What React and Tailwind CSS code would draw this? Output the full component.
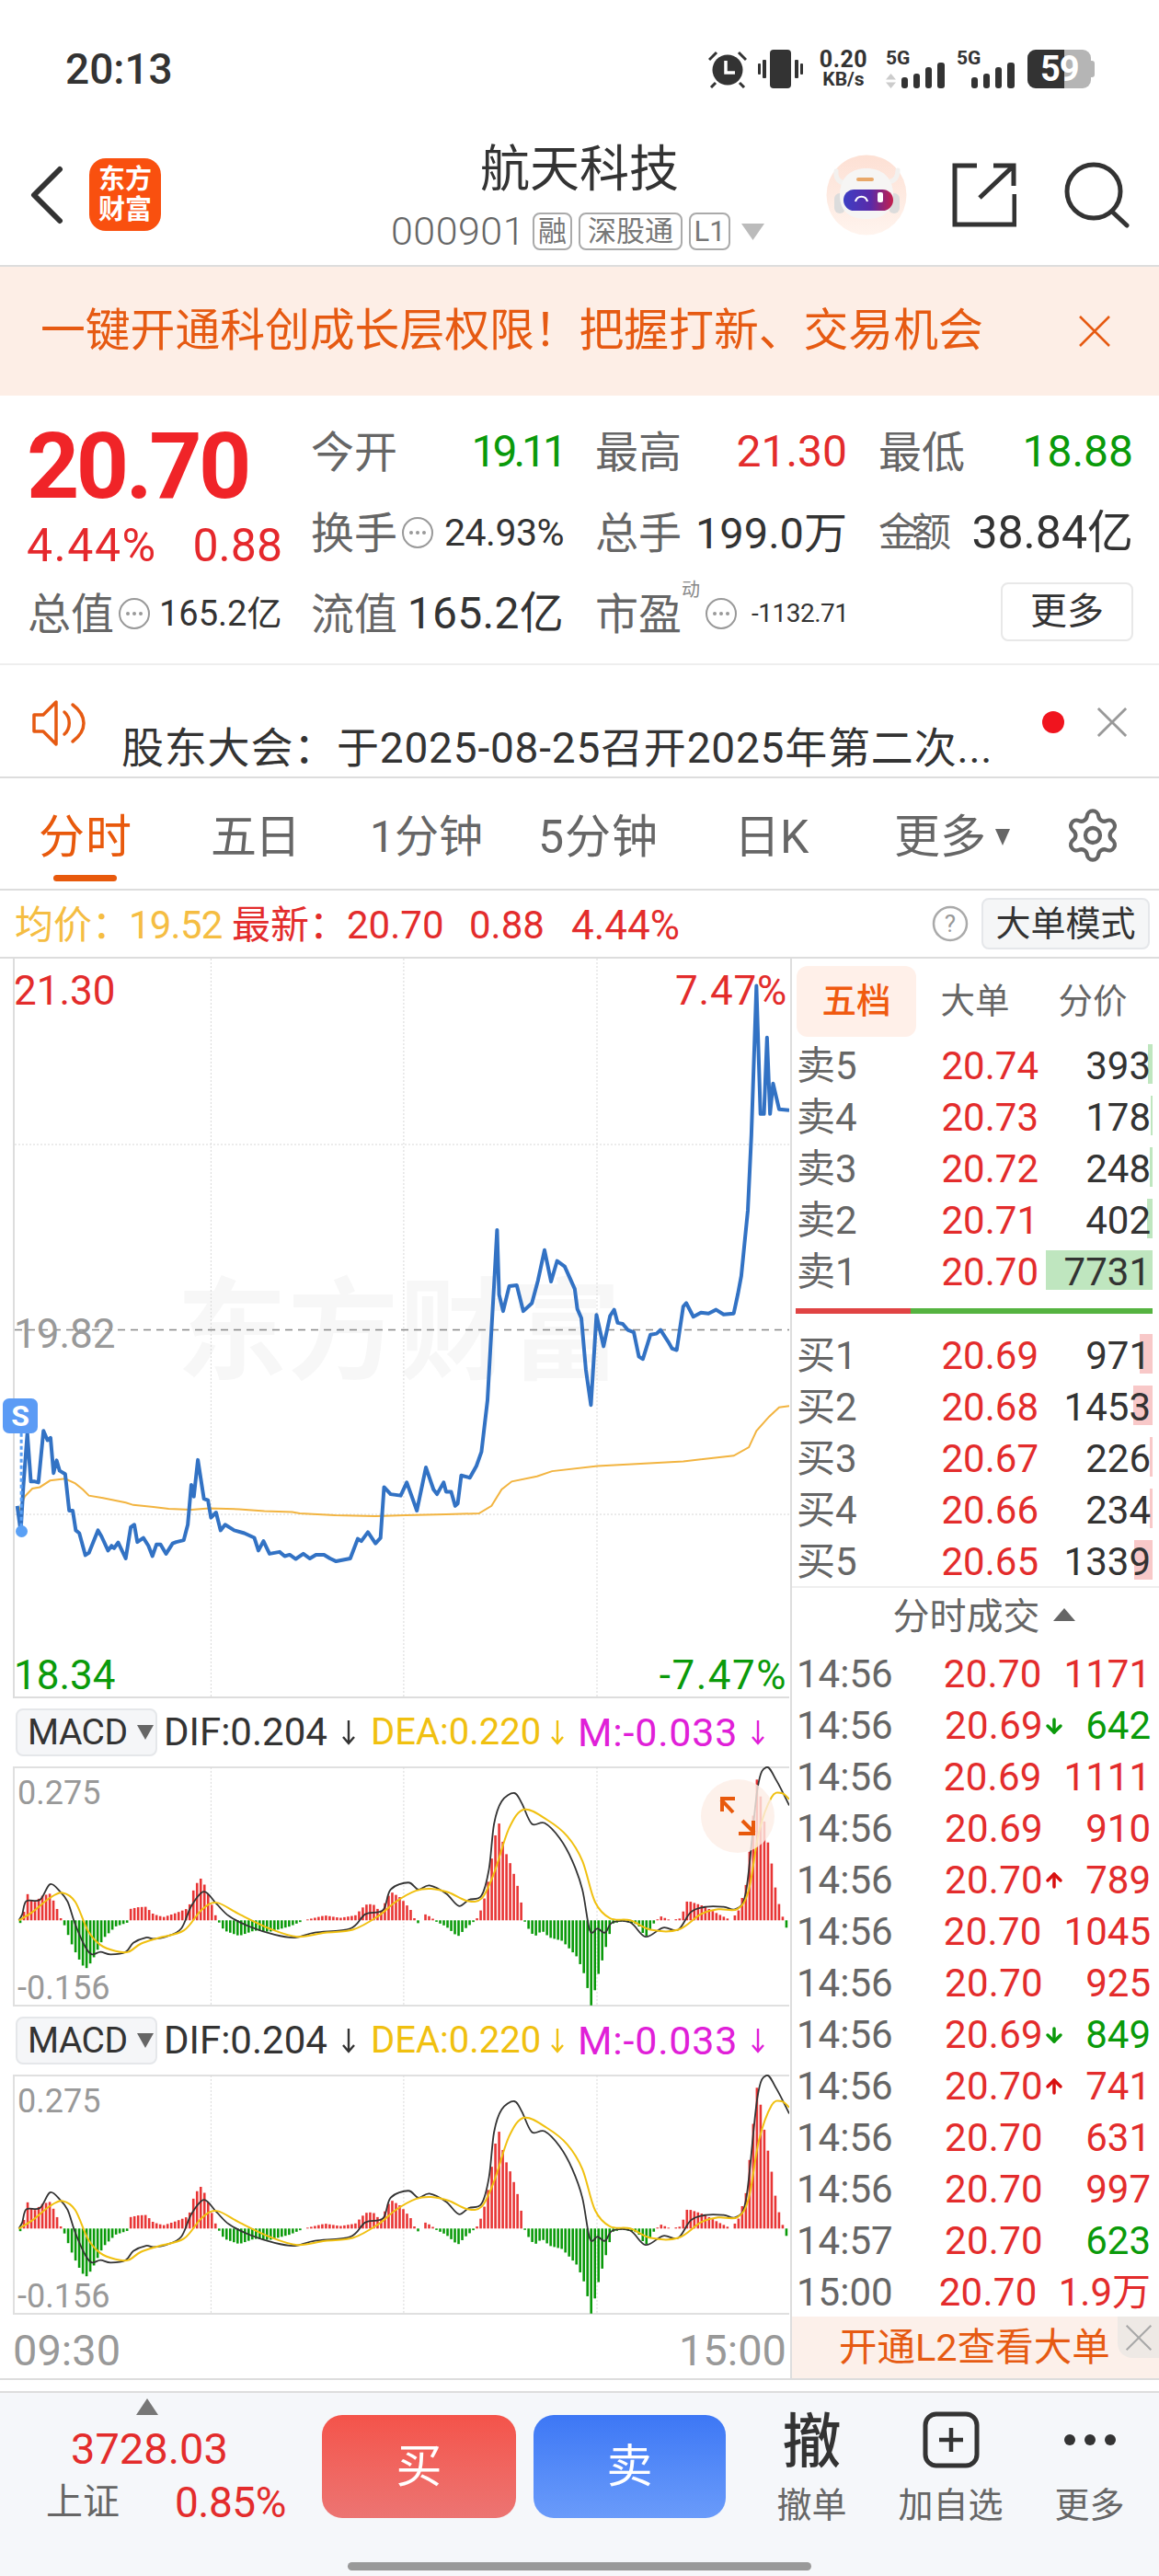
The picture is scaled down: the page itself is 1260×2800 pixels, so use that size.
import { ArrowDown, ArrowUp, Settings } from 'lucide-react';

const RED = 'text-[#e32c2c]';
const GREEN = 'text-[#0a9a0a]';

// price line, traced in a 1568-wide coordinate space
const pricePts = [[30,1170],[37,1225],[42,1130],[50,1015],[57,1118],[65,1118],[72,1120],[82,1010],[90,1030],[96,1025],[102,1100],[108,1073],[114,1095],[125,1102],[133,1180],[140,1180],[146,1222],[153,1228],[165,1275],[172,1270],[190,1222],[197,1235],[210,1265],[217,1255],[222,1260],[230,1248],[245,1282],[255,1215],[262,1210],[268,1247],[280,1238],[290,1255],[298,1277],[306,1252],[314,1252],[325,1272],[338,1250],[345,1247],[360,1243],[368,1210],[375,1125],[380,1150],[388,1072],[400,1155],[408,1158],[414,1195],[424,1184],[433,1222],[442,1210],[460,1222],[480,1228],[500,1238],[508,1265],[518,1245],[530,1272],[550,1268],[560,1277],[570,1274],[582,1283],[597,1272],[610,1282],[622,1274],[638,1274],[650,1282],[662,1288],[690,1282],[705,1240],[712,1245],[725,1226],[740,1250],[750,1238],[757,1130],[770,1145],[790,1148],[802,1120],[812,1150],[822,1180],[840,1088],[855,1135],[862,1145],[875,1120],[880,1140],[890,1140],[898,1170],[903,1165],[910,1105],[927,1110],[940,1085],[950,1055],[962,945],[968,830],[975,700],[981,582],[985,720],[993,755],[1005,702],[1020,700],[1033,755],[1050,738],[1062,690],[1075,625],[1088,692],[1100,648],[1115,660],[1135,708],[1140,750],[1148,770],[1157,880],[1167,955],[1178,763],[1192,830],[1205,765],[1213,752],[1220,780],[1230,782],[1240,795],[1252,800],[1262,852],[1270,857],[1285,805],[1297,803],[1305,795],[1320,820],[1328,835],[1337,838],[1350,745],[1356,738],[1370,767],[1385,758],[1400,760],[1415,752],[1430,762],[1450,760],[1458,720],[1465,680],[1478,540],[1485,380],[1495,62],[1503,335],[1510,335],[1516,172],[1522,335],[1528,270],[1540,325],[1560,327]];
const avgPts = [[30,1190],[45,1150],[60,1133],[75,1130],[95,1116],[125,1112],[145,1122],[160,1135],[172,1148],[200,1153],[245,1163],[260,1168],[300,1172],[330,1176],[375,1178],[410,1175],[470,1177],[520,1181],[575,1183],[590,1186],[660,1190],[740,1192],[800,1190],[880,1188],[945,1186],[970,1170],[990,1135],[1010,1118],[1060,1107],[1090,1096],[1180,1085],[1350,1075],[1450,1063],[1480,1045],[1495,1010],[1520,980],[1540,960],[1560,957]];

const macdBars = [[33,0],[40,-15],[48,72],[55,50],[65,45],[80,60],[95,65],[105,40],[118,0],[125,-15],[135,-50],[150,-90],[165,-120],[178,-100],[200,-45],[225,-15],[250,-5],[255,28],[270,32],[285,33],[300,15],[320,8],[345,18],[370,30],[378,70],[392,105],[402,85],[415,40],[425,5],[430,-5],[440,-25],[470,-38],[500,-25],[530,-28],[570,-15],[595,-2],[605,2],[640,12],[670,6],[700,12],[720,38],[735,40],[750,20],[770,70],[790,55],[810,25],[820,-3],[828,-10],[838,15],[850,8],[860,-3],[880,-15],[903,-40],[920,-18],[935,-3],[945,10],[960,70],[983,248],[995,175],[1010,130],[1025,70],[1035,0],[1040,-15],[1055,-40],[1070,-25],[1085,-42],[1110,-50],[1140,-90],[1155,-135],[1168,-210],[1180,-140],[1200,-50],[1210,-8],[1230,-2],[1260,-10],[1275,-42],[1290,-10],[1297,0],[1305,10],[1325,0],[1345,5],[1358,48],[1390,35],[1420,15],[1445,0],[1460,25],[1475,90],[1497,355],[1510,245],[1525,140],[1535,60],[1548,5],[1555,-20],[1560,-45]];
const difPts = [[33,555],[40,540],[48,508],[75,505],[95,467],[115,485],[130,510],[145,565],[165,620],[178,638],[195,632],[215,638],[245,632],[260,610],[285,597],[300,600],[325,595],[355,575],[375,520],[400,485],[425,515],[450,545],[490,570],[540,590],[580,597],[620,585],[690,575],[720,540],[755,530],[770,480],[805,463],[825,480],[847,470],[880,490],[905,520],[925,505],[950,495],[965,430],[975,320],[990,265],[1015,245],[1030,270],[1050,320],[1075,318],[1105,355],[1130,410],[1150,480],[1165,580],[1180,575],[1195,585],[1210,560],[1245,560],[1275,595],[1310,573],[1340,578],[1365,535],[1395,522],[1430,522],[1455,527],[1475,480],[1497,235],[1515,182],[1535,215],[1560,275]];
const deaPts = [[33,555],[60,535],[95,500],[120,488],[145,510],[170,580],[195,615],[225,630],[250,632],[275,612],[310,598],[360,580],[395,530],[425,512],[470,540],[530,575],[585,595],[640,585],[695,578],[745,545],[780,510],[820,483],[850,478],[885,487],[920,507],[950,502],[975,440],[1005,330],[1035,285],[1080,310],[1120,350],[1150,410],[1175,510],[1205,550],[1245,555],[1285,578],[1340,578],[1385,540],[1420,528],[1458,527],[1480,480],[1500,340],[1525,255],[1545,245],[1560,260]];

const sells = [
    ['卖5', '20.74', '393', 5],
    ['卖4', '20.73', '178', 2],
    ['卖3', '20.72', '248', 3],
    ['卖2', '20.71', '402', 6],
    ['卖1', '20.70', '7731', 116],
];
const buys = [
    ['买1', '20.69', '971', 14],
    ['买2', '20.68', '1453', 21],
    ['买3', '20.67', '226', 3],
    ['买4', '20.66', '234', 3],
    ['买5', '20.65', '1339', 20],
];
const trades = [
    ['14:56', '20.70', '', '1171', 'r'],
    ['14:56', '20.69', 'd', '642', 'g'],
    ['14:56', '20.69', '', '1111', 'r'],
    ['14:56', '20.69', '', '910', 'r'],
    ['14:56', '20.70', 'u', '789', 'r'],
    ['14:56', '20.70', '', '1045', 'r'],
    ['14:56', '20.70', '', '925', 'r'],
    ['14:56', '20.69', 'd', '849', 'g'],
    ['14:56', '20.70', 'u', '741', 'r'],
    ['14:56', '20.70', '', '631', 'r'],
    ['14:56', '20.70', '', '997', 'r'],
    ['14:57', '20.70', '', '623', 'g'],
    ['15:00', '20.70', '', '1.9万', 'r'],
];

const toLine = (pts) => pts.map((p) => p.join(',')).join(' ');

// smooth curve through the points
const toCurve = (pts) => {
    let d = `M${pts[0][0]} ${pts[0][1]}`;
    for (let i = 0; i < pts.length - 1; i++) {
        const p0 = pts[i - 1] || pts[i];
        const p1 = pts[i];
        const p2 = pts[i + 1];
        const p3 = pts[i + 2] || p2;
        const c1x = p1[0] + (p2[0] - p0[0]) / 6;
        const c1y = p1[1] + (p2[1] - p0[1]) / 6;
        const c2x = p2[0] - (p3[0] - p1[0]) / 6;
        const c2y = p2[1] - (p3[1] - p1[1]) / 6;
        d += ` C${c1x} ${c1y} ${c2x} ${c2y} ${p2[0]} ${p2[1]}`;
    }
    return d;
};

const barAt = (x) => {
    for (let i = 0; i < macdBars.length - 1; i++) {
        const [x0, v0] = macdBars[i];
        const [x1, v1] = macdBars[i + 1];
        if (x >= x0 && x <= x1) return v0 + ((v1 - v0) * (x - x0)) / (x1 - x0);
    }
    return 0;
};

const barXs = [];
for (let x = 36; x < 1560; x += 7.3) barXs.push(x);

function Cross({ size = 36, color = '#e65a12', width = 2.5 }) {
    return (
        <svg width={size} height={size} viewBox="0 0 36 36" fill="none" stroke={color} strokeWidth={width}>
            <path d="M2 2 L34 34 M34 2 L2 34" />
        </svg>
    );
}

function DotsCircle() {
    return (
        <svg width="36" height="36" viewBox="0 0 36 36" fill="none">
            <circle cx="18" cy="18" r="16" stroke="#999" strokeWidth="2" />
            <circle cx="11" cy="18" r="2" fill="#999" />
            <circle cx="18" cy="18" r="2" fill="#999" />
            <circle cx="25" cy="18" r="2" fill="#999" />
        </svg>
    );
}

function ThinArrow({ color }) {
    return (
        <svg width="18" height="28" viewBox="0 0 18 28" fill="none" stroke={color} strokeWidth="2.4">
            <path d="M9 1 V26 M3 19 L9 26 L15 19" />
        </svg>
    );
}

function Signal() {
    return (
        <svg width="47" height="28" viewBox="0 0 47 28" fill="#333">
            <rect x="0" y="16" width="7" height="12" rx="3" />
            <rect x="13" y="12" width="7" height="16" rx="3" />
            <rect x="26" y="5" width="7" height="23" rx="3" />
            <rect x="39" y="0" width="8" height="28" rx="3" />
        </svg>
    );
}

function StatusBar() {
    return (
        <div className="h-[140px] pt-[50px] pl-[71px] pr-[70px] flex justify-between items-start">
            <div className="text-[46px] leading-[50px] font-medium text-[#333]">20:13</div>
            <div className="flex items-center h-[50px]">
                <svg width="42" height="42" viewBox="0 0 42 42" className="mr-[12px]">
                    <circle cx="21" cy="22" r="16.5" fill="#333" />
                    <path d="M19 12 V25 H29" stroke="#fff" strokeWidth="3.5" fill="none" />
                    <path d="M1 11 L9 3 M41 11 L33 3 M8 36 L3 41 M34 36 L39 41" stroke="#333" strokeWidth="3" />
                </svg>
                <svg width="49" height="42" viewBox="0 0 49 42" className="mr-[18px]" fill="#333">
                    <rect x="13" y="0" width="23" height="42" rx="4" />
                    <rect x="0" y="15" width="3" height="12" rx="1" />
                    <rect x="5" y="11" width="4" height="20" rx="1" />
                    <rect x="40" y="11" width="4" height="20" rx="1" />
                    <rect x="46" y="15" width="3" height="12" rx="1" />
                </svg>
                <div className="w-[52px] mr-[20px] flex flex-col items-center font-bold text-[#333]">
                    <span className="text-[25px] leading-[23px] tracking-[0.5px]">0.20</span>
                    <span className="text-[21px] leading-[21px]">KB/s</span>
                </div>
                <div className="relative w-[64px] h-[42px] mr-[13px]">
                    <span className="absolute left-0 top-[-1px] text-[21px] leading-[20px] font-bold text-[#333]">5G</span>
                    <svg width="11" height="16" viewBox="0 0 11 16" className="absolute left-0 bottom-0" fill="#ccc">
                        <path d="M5.5 0 L11 6.5 H0 Z M5.5 16 L0 9.5 H11 Z" />
                    </svg>
                    <div className="absolute right-0 bottom-0 h-[28px] flex"><Signal /></div>
                </div>
                <div className="relative w-[63px] h-[42px] mr-[14px]">
                    <span className="absolute left-0 top-[-1px] text-[21px] leading-[20px] font-bold text-[#333]">5G</span>
                    <div className="absolute right-0 bottom-0 h-[28px] flex"><Signal /></div>
                </div>
                <div className="relative w-[73px] h-[42px]">
                    <div className="absolute left-0 top-0 w-[69px] h-[42px] rounded-[9px] bg-[#b5b5b5] overflow-hidden">
                        <div className="w-[40px] h-full bg-[#333]" />
                    </div>
                    <div className="absolute right-0 top-[12px] w-[6px] h-[18px] rounded-r-[3px] bg-[#b5b5b5]" />
                    <span className="absolute left-[14px] top-[2px] text-[38px] leading-[38px] font-bold text-white tracking-[-1px]">59</span>
                </div>
            </div>
        </div>
    );
}

function RobotIcon() {
    return (
        <svg width="88" height="88" viewBox="0 0 88 88">
            <defs>
                <linearGradient id="halo" x1="0" y1="0" x2="0" y2="1">
                    <stop offset="0" stopColor="#fde0d4" />
                    <stop offset="1" stopColor="#fff4ee" />
                </linearGradient>
                <linearGradient id="visor" x1="0" y1="0" x2="1" y2="0">
                    <stop offset="0" stopColor="#3d3fc4" />
                    <stop offset="0.55" stopColor="#5a2aa8" />
                    <stop offset="1" stopColor="#c41f4c" />
                </linearGradient>
            </defs>
            <circle cx="44" cy="44" r="43.5" fill="url(#halo)" />
            <path d="M11 18 C10 26 14 30 20 31 M78 17 C78 25 74 29 68 30" stroke="#f3f1ef" strokeWidth="5" fill="none" strokeLinecap="round" />
            <rect x="9" y="42" width="12" height="22" rx="6" fill="#dcdcdc" />
            <rect x="68" y="42" width="12" height="22" rx="6" fill="#dcdcdc" />
            <path d="M15 44 C15 22 30 15 44 15 C60 15 73 24 73 44 C73 62 62 70 44 70 C26 70 15 62 15 44 Z" fill="#f6f5f4" />
            <rect x="33" y="25" width="19" height="4" rx="2" fill="#e9a86a" />
            <rect x="19" y="38" width="54" height="23" rx="11.5" fill="url(#visor)" />
            <path d="M32 51 C34 44 43 44 45 51" stroke="#fff" strokeWidth="2.2" fill="none" />
            <rect x="56" y="41" width="6" height="11" rx="2" fill="#fff" />
        </svg>
    );
}

function Header() {
    return (
        <div className="h-[150px] border-b-2 border-[#ddd] flex items-start">
            <div className="w-[380px] flex items-center pl-[31px] pt-[32px]">
                <svg width="40" height="64" viewBox="0 0 40 64" fill="none" stroke="#333" strokeWidth="6" strokeLinecap="round" strokeLinejoin="round">
                    <path d="M34 4 L6 32 L34 60" />
                </svg>
                <div className="ml-[26px] w-[78px] h-[79px] rounded-[18px] bg-[#f9500f] flex flex-col items-center justify-center text-white font-bold text-[29px] leading-[33px]">
                    <span>东方</span>
                    <span>财富</span>
                </div>
            </div>
            <div className="w-[500px] flex flex-col items-center">
                <div className="mt-[17px] text-[54px] leading-[56px] text-[#333]">航天科技</div>
                <div className="mt-[18px] flex items-center -ml-[4px]">
                    <span className="text-[43px] leading-[41px] font-light text-[#666] tracking-[0.5px]">000901</span>
                    <span className="ml-[8px] w-[43px] h-[41px] rounded-[8px] border-2 border-[#aaa] flex items-center justify-center text-[31px] leading-none text-[#777]">融</span>
                    <span className="ml-[7px] w-[113px] h-[41px] rounded-[8px] border-2 border-[#aaa] flex items-center justify-center text-[31px] leading-none text-[#777]">深股通</span>
                    <span className="ml-[7px] w-[45px] h-[41px] rounded-[8px] border-2 border-[#aaa] flex items-center justify-center text-[31px] leading-none text-[#777]">L1</span>
                    <svg width="25" height="18" viewBox="0 0 25 18" className="ml-[12px]"><path d="M0 0 H25 L12.5 18 Z" fill="#bbb" /></svg>
                </div>
            </div>
            <div className="flex-1 flex items-center pt-[28px] pl-[18px]">
                <RobotIcon />
                <svg width="70" height="70" viewBox="0 0 70 70" fill="none" stroke="#333" strokeWidth="5" className="ml-[49px]">
                    <path d="M27 3 H3 V67 H68 V34" />
                    <path d="M30 38 L66 4 M45 3 H67 V25" />
                </svg>
                <svg width="72" height="72" viewBox="0 0 72 72" fill="none" stroke="#333" strokeWidth="5" strokeLinecap="round" className="ml-[52px]">
                    <circle cx="32" cy="32" r="29" />
                    <path d="M52 54 L68 69" />
                </svg>
            </div>
        </div>
    );
}

function Banner() {
    return (
        <div className="h-[140px] bg-[#fdeee6] flex items-center pl-[44px]">
            <div className="w-[1128px] text-[48.8px] leading-none text-[#e65a12] whitespace-nowrap">一键开通科创成长层权限！把握打新、交易机会</div>
            <Cross />
        </div>
    );
}

function StatCell({ label, last, children }) {
    return (
        <div className={`h-[88px] flex items-center justify-between whitespace-nowrap ${last ? '' : 'pr-[34px]'}`}>
            <span className="text-[47px] leading-none text-[#666]">{label}</span>
            {children}
        </div>
    );
}

function Stats() {
    return (
        <div className="h-[293px] border-b-2 border-[#eee] pl-[32px] pt-[17px]">
            <div className="grid grid-cols-[306px_309px_308px_277px]">
                <div className="row-span-2">
                    <div className="mt-[10px] -ml-[3px] h-[100px] text-[100px] leading-[100px] font-bold text-[#f02428] tracking-[-3.5px]">20.70</div>
                    <div className="mt-[11px] -ml-[3px] h-[50px] flex items-center justify-between w-[278px] text-[50px] leading-none text-[#e5282c]">
                        <span className="tracking-[1.5px]">4.44%</span>
                        <span>0.88</span>
                    </div>
                </div>
                <StatCell label="今开"><span className={`text-[48px] leading-none tracking-[-4px] ${GREEN}`}>19.11</span></StatCell>
                <StatCell label="最高"><span className={`text-[48px] leading-none ${RED}`}>21.30</span></StatCell>
                <StatCell label="最低" last><span className={`text-[48px] leading-none ${GREEN}`}>18.88</span></StatCell>

                <StatCell label="换手">
                    <span className="ml-[4px] mr-auto"><DotsCircle /></span>
                    <span className="text-[41px] leading-none text-[#333] tracking-[-0.5px]">24.93%</span>
                </StatCell>
                <StatCell label="总手"><span className="text-[47px] leading-none text-[#333]">199.0万</span></StatCell>
                <div className="h-[88px] flex items-center justify-between whitespace-nowrap">
                    <span className="text-[43px] leading-none text-[#666] tracking-[-7px]">金额</span>
                    <span className="text-[50px] leading-none text-[#333]">38.84亿</span>
                </div>

                <div className="h-[88px] -ml-[2px] flex items-center whitespace-nowrap">
                    <span className="text-[47px] leading-none text-[#666]">总值</span>
                    <span className="ml-[4px]"><DotsCircle /></span>
                    <span className="ml-[9px] text-[38px] leading-none text-[#333]">165.2亿</span>
                </div>
                <StatCell label="流值"><span className="text-[48px] leading-none text-[#333] tracking-[0.3px]">165.2亿</span></StatCell>
                <div className="h-[88px] flex items-center whitespace-nowrap">
                    <span className="text-[47px] leading-none text-[#666]">市盈</span>
                    <span className="self-start mt-[8px] text-[20px] leading-none text-[#888]">动</span>
                    <span className="ml-[5px]"><DotsCircle /></span>
                    <span className="ml-[15px] text-[28px] leading-none text-[#333] tracking-[-0.5px]">-1132.71</span>
                </div>
                <div className="h-[88px] pt-[10px]">
                    <div className="ml-[133px] w-[144px] h-[64px] rounded-[8px] border-2 border-[#e8e8e8] flex items-center justify-center text-[40px] leading-none text-[#333]">更多</div>
                </div>
            </div>
        </div>
    );
}

function Notice() {
    return (
        <div className="h-[123px] border-b-2 border-[#ddd] relative flex items-start">
            <svg width="60" height="52" viewBox="0 0 60 52" fill="none" stroke="#e65a12" strokeWidth="3.5" strokeLinejoin="round" strokeLinecap="round" className="ml-[35px] mt-[37px]">
                <path d="M2 17 H12 L26 3 V49 L12 35 H2 Z" />
                <path d="M35 14 C42 20 42 32 35 38" />
                <path d="M44 6 C60 18 60 34 44 46" />
            </svg>
            <div className="ml-[37px] mt-[65px] text-[46px] leading-[50px] text-[#333] whitespace-nowrap tracking-[0.8px]">股东大会：于2025-08-25召开2025年第二次...</div>
            <div className="absolute left-[1133px] top-[50px] w-[24px] h-[24px] rounded-full bg-[#f0141e]" />
            <div className="absolute left-[1192px] top-[45px]"><Cross size={34} color="#999" width={3} /></div>
        </div>
    );
}

function Tabs() {
    return (
        <div className="h-[122px] pt-[6px] border-b-2 border-[#ddd] relative text-[50px] leading-none text-[#666] whitespace-nowrap">
            <div className="flex h-[116px] items-center">
                <div className="w-[185px] pl-[42px] text-[#e8590c]">
                    <span className="tracking-[1px]">分时</span>
                </div>
                <div className="w-[217px] pl-[44px] tracking-[-2px]">五日</div>
                <div className="w-[183px] text-[48px]">1分钟</div>
                <div className="w-[213px] tracking-[1px]">5分钟</div>
                <div className="w-[174px]">日K</div>
                <div className="flex items-center">
                    <span>更多</span>
                    <svg width="16" height="18" viewBox="0 0 16 18" className="ml-[10px]"><path d="M0 0 H16 L8 18 Z" fill="#666" /></svg>
                </div>
                <Settings size={64} strokeWidth={1.6} color="#666" className="ml-[58px] -mt-[4px]" />
            </div>
            <div className="absolute left-[58px] top-[105px] w-[69px] h-[7px] rounded-full bg-[#e8590c]" />
        </div>
    );
}

function InfoRow() {
    return (
        <div className="h-[74px] pt-[4px] border-b-2 border-[#ddd] flex items-center pl-[16px] text-[42px] leading-none whitespace-nowrap">
            <span className="text-[#f5bd42] w-[124px]">均价：</span>
            <span className="text-[#f5bd42] w-[112px] tracking-[-0.8px]">19.52</span>
            <span className={`${RED} w-[125px]`}>最新：</span>
            <span className={`${RED} w-[133px]`}>20.70</span>
            <span className={`${RED} w-[111px]`}>0.88</span>
            <span className={`${RED} w-[392px] text-[44px]`}>4.44%</span>
            <svg width="40" height="40" viewBox="0 0 40 40" fill="none" className="-mt-[4px]">
                <circle cx="20" cy="20" r="18" stroke="#aaa" strokeWidth="2.5" />
                <text x="20" y="29" fontSize="26" textAnchor="middle" fill="#999">?</text>
            </svg>
            <div className="ml-[14px] -mt-[4px] w-[183px] h-[56px] rounded-[8px] border-2 border-[#e5e7ea] bg-[#f5f6f7] flex items-center justify-center text-[38px] leading-none text-[#333]">大单模式</div>
        </div>
    );
}

function PriceChart() {
    const lbl = 'absolute text-[44px] leading-[44px]';
    return (
        <div className="relative ml-[14px] w-[844px] h-[804px] border-l-2 border-b-2 border-[#ddd]">
            <div className="absolute left-[176px] top-[342px] text-[120px] leading-[130px] font-bold text-[#f7f7f7] tracking-[1px] whitespace-nowrap">东方财富</div>
            <svg className="absolute left-0 top-0 w-[842px] h-[802px]" viewBox="25 4 1535 1572" preserveAspectRatio="none" fill="none">
                {[414, 796, 1179].map((x) => (
                    <line key={x} x1={x} y1="4" x2={x} y2="1576" stroke="#d8d8d8" strokeDasharray="2 2" vectorEffect="non-scaling-stroke" />
                ))}
                {[400, 1188].map((y) => (
                    <line key={y} x1="25" y1={y} x2="1560" y2={y} stroke="#d8d8d8" strokeDasharray="2 2" vectorEffect="non-scaling-stroke" />
                ))}
                <line x1="25" y1="795" x2="1560" y2="795" stroke="#888" strokeWidth="1.5" strokeDasharray="8 6" vectorEffect="non-scaling-stroke" />
                <polyline points={toLine(avgPts)} stroke="#f2b440" strokeWidth="2" vectorEffect="non-scaling-stroke" />
                <polyline points={toLine(pricePts)} stroke="#3272c4" strokeWidth="4" strokeLinejoin="round" vectorEffect="non-scaling-stroke" />
                <line x1="38" y1="1015" x2="38" y2="1225" stroke="#5aa0f5" strokeWidth="3" strokeDasharray="4 3" vectorEffect="non-scaling-stroke" />
            </svg>
            <div className={`${lbl} ${RED} -left-[1px] top-[13px]`}>21.30</div>
            <div className={`${lbl} ${RED} right-[2px] top-[13px] tracking-[0.8px]`}>7.47%</div>
            <div className={`${lbl} text-[#999] -left-[1px] top-[386px]`}>19.82</div>
            <div className={`${lbl} ${GREEN} -left-[1px] top-[757px]`}>18.34</div>
            <div className={`${lbl} ${GREEN} right-[2px] top-[757px] tracking-[1.5px]`}>-7.47%</div>
            <div className="absolute left-[-13px] top-[478px] w-[38px] h-[38px] rounded-[7px] bg-[#5b9bf5] flex items-center justify-center text-[32px] leading-none font-bold text-white">S</div>
            <div className="absolute left-[1px] top-[616px] w-[13px] h-[13px] rounded-full bg-[#5aa0f5]" />
        </div>
    );
}

function MacdHeader() {
    return (
        <div className="h-[74px] pl-[17px] flex items-center leading-none whitespace-nowrap">
            <div className="w-[154px] h-[52px] rounded-[8px] border-2 border-[#e5e7ea] bg-[#f5f6f8] flex items-center pl-[11px] text-[#333]">
                <span className="text-[39px] tracking-[-0.5px]">MACD</span>
                <svg width="18" height="16" viewBox="0 0 18 16" className="ml-[10px]"><path d="M0 0 H18 L9 16 Z" fill="#666" /></svg>
            </div>
            <span className="ml-[7px] w-[192px] text-[42px] text-[#333]">DIF:0.204</span>
            <ThinArrow color="#333" />
            <span className="ml-[15px] w-[194px] text-[40px] text-[#f0c010]">DEA:0.220</span>
            <ThinArrow color="#f0c010" />
            <span className="ml-[13px] w-[187px] text-[43px] tracking-[0.8px] text-[#e020d8]">M:-0.033</span>
            <ThinArrow color="#e020d8" />
        </div>
    );
}

function MacdChart({ resize }) {
    return (
        <div className="relative ml-[14px] w-[844px] h-[261px] border-l-2 border-t-2 border-b-2 border-[#e0e0e0]">
            <svg className="absolute left-0 -top-[2px] w-[842px] h-[261px]" viewBox="25 180 1535 585" preserveAspectRatio="none" fill="none">
                {[414, 796, 1179].map((x) => (
                    <line key={x} x1={x} y1="182" x2={x} y2="764" stroke="#d8d8d8" strokeDasharray="2 2" vectorEffect="non-scaling-stroke" />
                ))}
                {barXs.map((x) => {
                    const v = barAt(x);
                    if (Math.abs(v) < 1) return null;
                    return (
                        <line
                            key={x}
                            x1={x}
                            x2={x}
                            y1="555"
                            y2={555 - v}
                            stroke={v > 0 ? '#e83535' : '#0a9a0a'}
                            strokeWidth="2.6"
                            vectorEffect="non-scaling-stroke"
                        />
                    );
                })}
                <path d={toCurve(difPts)} stroke="#333" strokeWidth="1.8" vectorEffect="non-scaling-stroke" />
                <path d={toCurve(deaPts)} stroke="#f0c010" strokeWidth="2" vectorEffect="non-scaling-stroke" />
            </svg>
            <div className="absolute left-[3px] top-[7px] text-[36px] leading-[40px] text-[#999]">0.275</div>
            <div className="absolute left-[3px] top-[219px] text-[36px] leading-[40px] text-[#999]">-0.156</div>
            {resize && (
                <div className="absolute left-[746px] top-[12px] w-[80px] h-[80px] rounded-full bg-[#fdeee6]/80 flex items-center justify-center">
                    <svg width="46" height="46" viewBox="0 0 46 46" fill="none" stroke="#e8590c" strokeWidth="4">
                        <path d="M6 18 V4 H20 M5 5 L18 19" />
                        <path d="M40 28 V42 H24 M41 41 L28 28" />
                    </svg>
                </div>
            )}
        </div>
    );
}

function BookRow({ row, color }) {
    const [label, price, vol, width] = row;
    return (
        <div className="relative h-[56px] pt-[4px] flex items-center pl-[5px] whitespace-nowrap">
            <div className={`absolute right-[7px] top-[6px] h-[43px] ${color}`} style={{ width }} />
            <span className="relative w-[101px] text-[42px] leading-none text-[#666]">{label}</span>
            <span className={`relative w-[162px] text-right text-[42px] leading-none ${RED}`}>{price}</span>
            <span className="relative flex-1 pr-[9px] text-right text-[42px] leading-none text-[#333]">{vol}</span>
        </div>
    );
}

function TradeRow({ row }) {
    const [time, price, dir, vol, side] = row;
    return (
        <div className="h-[56px] pt-[4px] flex items-center pl-[5px] text-[42px] leading-none whitespace-nowrap">
            <span className="w-[101px] text-[#666]">{time}</span>
            <span className={`w-[167px] text-right tracking-[0.3px] ${RED}`}>{price}</span>
            <span className="w-[24px] flex justify-center">
                {dir === 'd' && <ArrowDown size={24} strokeWidth={3.5} color="#0a9a0a" />}
                {dir === 'u' && <ArrowUp size={24} strokeWidth={3.5} color="#d81010" />}
            </span>
            <span className={`flex-1 pr-[9px] text-right ${side === 'g' ? GREEN : RED}`}>{vol}</span>
        </div>
    );
}

function SidePanel() {
    return (
        <div className="w-[401px] border-l-2 border-[#ddd] flex flex-col">
            <div className="h-[87px] pt-[8px] pl-[5px] flex text-[37.5px] leading-none text-[#666]">
                <div className="w-[130px] h-[77px] rounded-[12px] bg-[#fff0e9] flex items-center justify-center font-medium text-[#f05a10]">五档</div>
                <div className="w-[128px] h-[77px] flex items-center justify-center">大单</div>
                <div className="w-[128px] h-[77px] flex items-center justify-center">分价</div>
            </div>
            {sells.map((r) => <BookRow key={r[0]} row={r} color="bg-[#bfe6bf]" />)}
            <div className="mt-[13px] ml-[4px] w-[388px] h-[6px] flex">
                <div className="w-[125px] bg-[#e04343]" />
                <div className="flex-1 bg-[#55b340]" />
            </div>
            <div className="h-[16px]" />
            {buys.map((r) => <BookRow key={r[0]} row={r} color="bg-[#f8c8c8]" />)}
            <div className="h-[66px] pl-[18px] border-t-2 border-[#eee] flex items-center justify-center text-[40px] leading-none text-[#666]">
                <span>分时成交</span>
                <svg width="24" height="14" viewBox="0 0 24 14" className="ml-[14px] mb-[6px]"><path d="M12 0 L24 14 H0 Z" fill="#666" /></svg>
            </div>
            {trades.map((r, i) => <TradeRow key={i} row={r} />)}
            <div className="relative flex-1 bg-[#fcf0ea] flex items-center pl-[51px] text-[41.5px] leading-none text-[#e65a12] whitespace-nowrap">
                开通L2查看大单
                <div className="absolute right-0 top-0 w-[45px] h-[45px] rounded-bl-[16px] bg-[#eee9e5] flex items-center justify-center">
                    <Cross size={30} color="#a8a8a8" width={2.5} />
                </div>
            </div>
        </div>
    );
}

function Footer() {
    return (
        <div className="flex-1 bg-[#f5f7fa] border-t-2 border-[#ddd] flex flex-col">
            <div className="h-[184px] flex items-start">
                <div className="w-[350px] flex flex-col">
                    <svg width="24" height="18" viewBox="0 0 24 18" className="ml-[148px] mt-[6px]"><path d="M12 0 L24 18 H0 Z" fill="#777" /></svg>
                    <div className={`ml-[77px] mt-[12px] text-[47px] leading-[50px] ${RED}`}>3728.03</div>
                    <div className="ml-[50px] mt-[8px] h-[50px] flex items-center whitespace-nowrap">
                        <span className="w-[140px] text-[40px] leading-none text-[#666]">上证</span>
                        <span className={`text-[46px] leading-none tracking-[-0.5px] ${RED}`}>0.85%</span>
                    </div>
                </div>
                <div className="mt-[24px] w-[211px] h-[112px] rounded-[22px] bg-gradient-to-b from-[#f4534a] to-[#ec7472] flex items-center justify-center text-[50px] leading-none text-white">买</div>
                <div className="mt-[24px] ml-[19px] w-[209px] h-[112px] rounded-[22px] bg-gradient-to-b from-[#3d77f5] to-[#6a9bfa] flex items-center justify-center text-[50px] leading-none text-white">卖</div>
                <div className="ml-[18px] w-[151px] flex flex-col items-center">
                    <div className="mt-[20px] h-[68px] flex items-center text-[64px] leading-none font-medium text-[#333]">撤</div>
                    <div className="h-[68px] flex items-center text-[38px] leading-none text-[#666]">撤单</div>
                </div>
                <div className="w-[151px] flex flex-col items-center">
                    <div className="mt-[20px] h-[68px] flex items-center">
                        <svg width="62" height="62" viewBox="0 0 62 62" fill="none" stroke="#333" className="-mt-[6px]">
                            <rect x="3" y="3" width="56" height="56" rx="12" strokeWidth="5" />
                            <path d="M31 18 V44 M18 31 H44" strokeWidth="4.5" />
                        </svg>
                    </div>
                    <div className="h-[68px] flex items-center text-[38px] leading-none text-[#666]">加自选</div>
                </div>
                <div className="w-[151px] flex flex-col items-center">
                    <div className="mt-[20px] h-[68px] flex items-center">
                        <svg width="56" height="12" viewBox="0 0 56 12" fill="#333" className="-mt-[6px]">
                            <circle cx="6" cy="6" r="6" /><circle cx="28" cy="6" r="6" /><circle cx="50" cy="6" r="6" />
                        </svg>
                    </div>
                    <div className="h-[68px] flex items-center text-[38px] leading-none text-[#666]">更多</div>
                </div>
            </div>
            <div className="mx-auto w-[504px] h-[9px] rounded-full bg-[#999]" />
        </div>
    );
}

export default function App() {
    return (
        <div className="w-[1260px] h-[2800px] bg-white overflow-hidden flex flex-col [font-family:Roboto,'Noto_Sans_CJK_SC',sans-serif]">
            <StatusBar />
            <Header />
            <Banner />
            <Stats />
            <Notice />
            <Tabs />
            <InfoRow />
            {/* Chart area */}
            <div className="h-[1545px] shrink-0 border-b-2 border-[#ddd] flex">
                <div className="w-[859px] flex flex-col">
                    <PriceChart />
                    <MacdHeader />
                    <MacdChart resize />
                    <MacdHeader />
                    <MacdChart />
                    <div className="flex-1 pt-[8px] pl-[14px] pr-[4px] flex items-center justify-between text-[47px] leading-none text-[#999]">
                        <span>09:30</span>
                        <span>15:00</span>
                    </div>
                </div>
                <SidePanel />
            </div>
            <div className="h-[12px] shrink-0" />
            <Footer />
        </div>
    );
}
